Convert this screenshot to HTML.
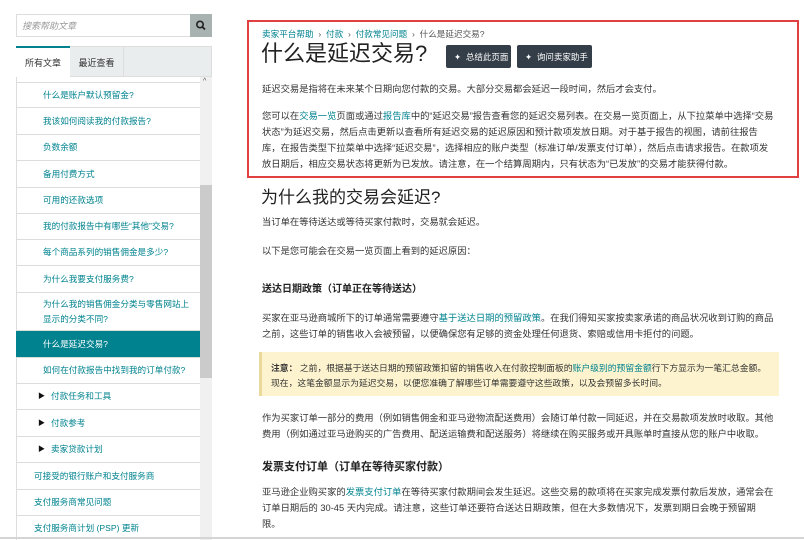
<!DOCTYPE html>
<html><head><meta charset="utf-8"><style>
*{box-sizing:border-box;margin:0;padding:0}
body{width:804px;height:540px;overflow:hidden;background:#fff;font-family:"Liberation Sans","Noto Sans CJK SC",sans-serif;color:#333;position:relative;font-size:10px}
.a{position:absolute}
a{color:#00838f;text-decoration:none}
.it{position:absolute;left:16px;width:184px;border-bottom:1px solid #dcdcdc;color:#00838f;font-size:8.6px;display:flex;align-items:center;line-height:15px}
.p{position:absolute;left:262px;width:512px;font-size:9.3px;line-height:16px}
.btn{position:absolute;top:45px;height:23px;background:#343e48;color:#fff;font-size:8.5px;display:flex;align-items:center;padding-left:8px;border-radius:2px;white-space:nowrap}
</style></head><body>
<div class="a" style="left:16px;top:14px;width:196px;height:23px;border:1px solid #ddd"></div>
<div class="a" style="left:22px;top:19px;font-size:9px;color:#999;font-style:italic">搜索帮助文章</div>
<div class="a" style="left:190px;top:14px;width:22px;height:23px;background:#a7b2b1"><svg width="22" height="23"><circle cx="10" cy="10.5" r="3.2" stroke="#222" stroke-width="1.6" fill="none"/><line x1="12.4" y1="13" x2="15" y2="15.5" stroke="#222" stroke-width="1.8"/></svg></div>
<div class="a" style="left:16px;top:46px;width:196px;height:31px;background:#eaeded;border:1px solid #ddd"></div>
<div class="a" style="left:16px;top:46px;width:54px;height:31px;background:#fff;border-top:2px solid #00838f;font-size:9px;display:flex;align-items:center;justify-content:center">所有文章</div>
<div class="a" style="left:70px;top:47px;width:54px;height:30px;border-right:1px solid #ddd;font-size:9px;display:flex;align-items:center;justify-content:center">最近查看</div>
<div class="a" style="left:16px;top:77px;width:1px;height:463px;background:#ddd"></div>
<div class="a" style="left:200px;top:77px;width:12px;height:463px;background:#f0f0f0"></div>
<div class="a" style="left:200px;top:185px;width:12px;height:193px;background:#cbcbcb"></div>
<div class="a" style="left:203px;top:78px;font-size:7px;color:#555">^</div>
<div class="it" style="top:82px;height:26px;padding-left:27px;border-top:1px solid #dcdcdc">什么是账户默认预留金?</div>
<div class="it" style="top:108px;height:27px;padding-left:27px">我该如何阅读我的付款报告?</div>
<div class="it" style="top:135px;height:26px;padding-left:27px">负数余额</div>
<div class="it" style="top:161px;height:27px;padding-left:27px">备用付费方式</div>
<div class="it" style="top:188px;height:26px;padding-left:27px">可用的还款选项</div>
<div class="it" style="top:214px;height:26px;padding-left:27px">我的付款报告中有哪些“其他”交易?</div>
<div class="it" style="top:240px;height:26px;padding-left:27px">每个商品系列的销售佣金是多少?</div>
<div class="it" style="top:266px;height:27px;padding-left:27px">为什么我要支付服务费?</div>
<div class="it" style="top:293px;height:38px;padding-left:27px">为什么我的销售佣金分类与零售网站上<br>显示的分类不同?</div>
<div class="it" style="top:331px;height:27px;padding-left:27px;background:#00838f;color:#fff">什么是延迟交易?</div>
<div class="it" style="top:358px;height:26px;padding-left:27px">如何在付款报告中找到我的订单付款?</div>
<div class="it" style="top:384px;height:26px;padding-left:22px"><span style="color:#111;font-size:7px;margin-right:6px">▶</span>付款任务和工具</div>
<div class="it" style="top:410px;height:27px;padding-left:22px"><span style="color:#111;font-size:7px;margin-right:6px">▶</span>付款参考</div>
<div class="it" style="top:437px;height:26px;padding-left:22px"><span style="color:#111;font-size:7px;margin-right:6px">▶</span>卖家贷款计划</div>
<div class="it" style="top:463px;height:27px;padding-left:18px">可接受的银行账户和支付服务商</div>
<div class="it" style="top:490px;height:26px;padding-left:18px">支付服务商常见问题</div>
<div class="it" style="top:516px;height:24px;padding-left:18px;border-bottom:none">支付服务商计划 (PSP) 更新</div>
<div class="a" style="left:0;top:537px;width:804px;height:2px;background:#d5d5d5"></div>

<div class="a" style="left:247px;top:20px;width:552px;height:158px;border:2px solid #e04040"></div>
<div class="a" style="left:262px;top:28px;font-size:8.6px;color:#555"><a>卖家平台帮助</a> &nbsp;›&nbsp; <a>付款</a> &nbsp;›&nbsp; <a>付款常见问题</a> &nbsp;›&nbsp; 什么是延迟交易?</div>
<div class="a" style="left:261px;top:40px;font-size:22px;color:#222;line-height:28px">什么是延迟交易?</div>
<div class="btn" style="left:446px;width:65px">✦&nbsp; 总结此页面</div>
<div class="btn" style="left:517px;width:75px">✦&nbsp; 询问卖家助手</div>
<div class="p" style="top:81px">延迟交易是指将在未来某个日期向您付款的交易。大部分交易都会延迟一段时间，然后才会支付。</div>
<div class="p" style="top:108px">您可以在<a>交易一览</a>页面或通过<a>报告库</a>中的“延迟交易”报告查看您的延迟交易列表。在交易一览页面上，从下拉菜单中选择“交易状态”为延迟交易，然后点击更新以查看所有延迟交易的延迟原因和预计款项发放日期。对于基于报告的视图，请前往报告库，在报告类型下拉菜单中选择“延迟交易”，选择相应的账户类型（标准订单/发票支付订单），然后点击请求报告。在款项发放日期后，相应交易状态将更新为已发放。请注意，在一个结算周期内，只有状态为“已发放”的交易才能获得付款。</div>
<div class="a" style="left:261px;top:187px;font-size:17px;color:#222;line-height:22px">为什么我的交易会延迟?</div>
<div class="p" style="top:214px">当订单在等待送达或等待买家付款时，交易就会延迟。</div>
<div class="p" style="top:243px">以下是您可能会在交易一览页面上看到的延迟原因：</div>
<div class="p" style="top:282px;font-weight:bold;font-size:10px;color:#222">送达日期政策（订单正在等待送达）</div>
<div class="p" style="top:310px">买家在亚马逊商城所下的订单通常需要遵守<a>基于送达日期的预留政策</a>。在我们得知买家按卖家承诺的商品状况收到订购的商品之前，这些订单的销售收入会被预留，以便确保您有足够的资金处理任何退货、索赔或信用卡拒付的问题。</div>
<div class="a" style="left:259px;top:352px;width:520px;height:44px;background:#fdf4cf;border-left:3px solid #e9d99a"></div>
<div class="a" style="left:271px;top:361px;width:500px;font-size:8.8px;line-height:15px"><b>注意：</b> 之前，根据基于送达日期的预留政策扣留的销售收入在付款控制面板的<a>账户级别的预留金额</a>行下方显示为一笔汇总金额。现在，这笔金额显示为延迟交易，以便您准确了解哪些订单需要遵守这些政策，以及会预留多长时间。</div>
<div class="p" style="top:410px">作为买家订单一部分的费用（例如销售佣金和亚马逊物流配送费用）会随订单付款一同延迟，并在交易款项发放时收取。其他费用（例如通过亚马逊购买的广告费用、配送运输费和配送服务）将继续在购买服务或开具账单时直接从您的账户中收取。</div>
<div class="p" style="top:459px;font-weight:bold;font-size:11px;color:#222">发票支付订单（订单在等待买家付款）</div>
<div class="p" style="top:484px">亚马逊企业购买家的<a>发票支付订单</a>在等待买家付款期间会发生延迟。这些交易的款项将在买家完成发票付款后发放，通常会在订单日期后的 30-45 天内完成。请注意，这些订单还要符合送达日期政策，但在大多数情况下，发票到期日会晚于预留期限。</div>
</body></html>
